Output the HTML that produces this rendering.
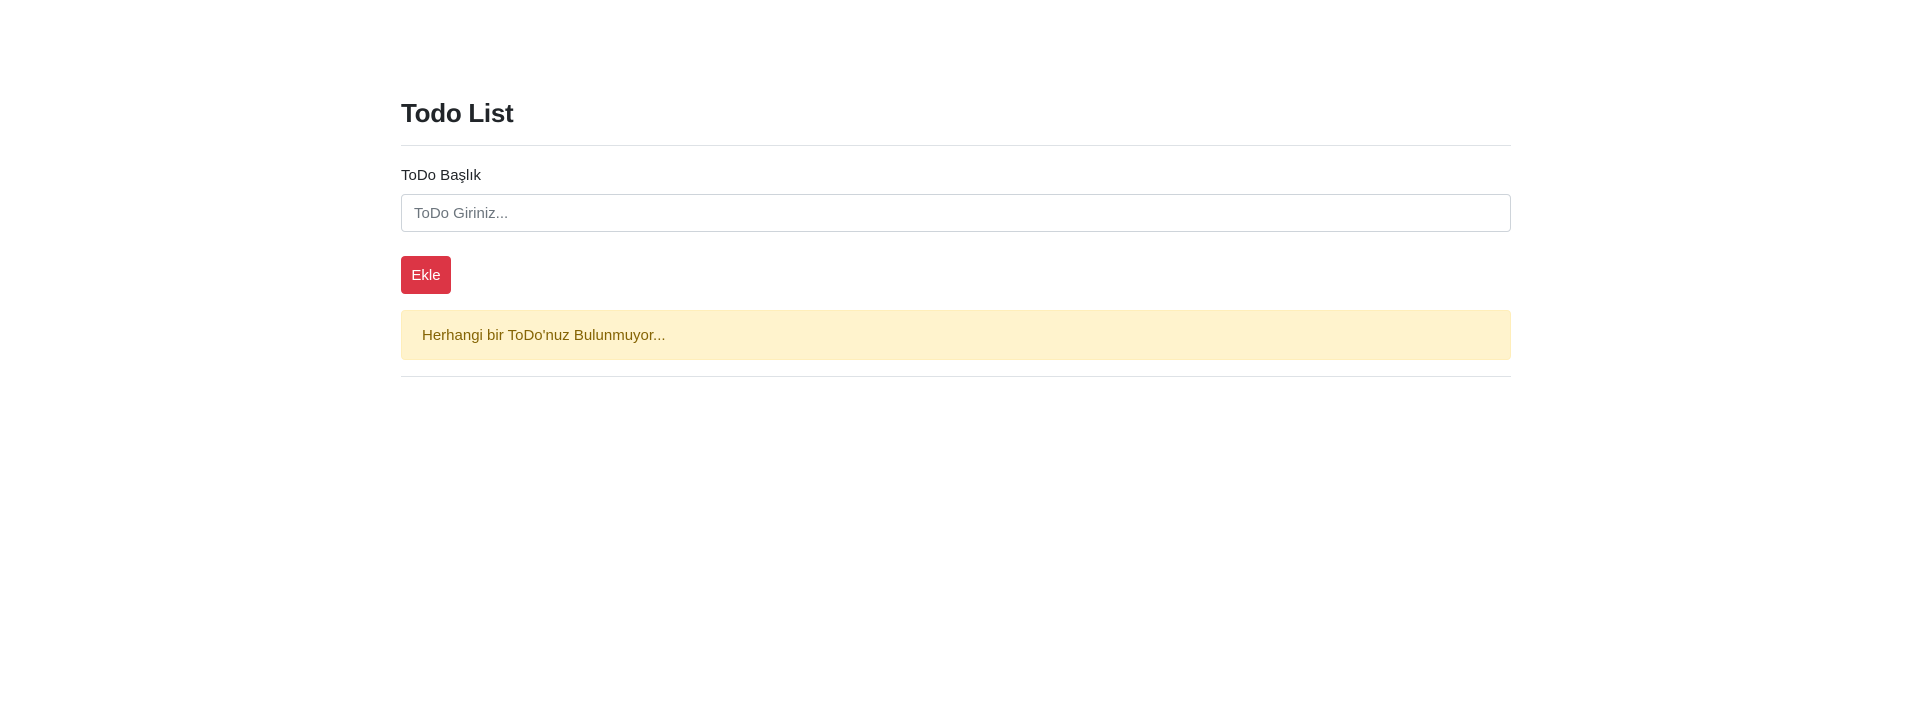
<!DOCTYPE html>
<html><head><meta charset="utf-8"><style>
body{margin:0;background:#fff;font-family:"Liberation Sans",sans-serif;color:#212529;width:1909px;height:728px;overflow:hidden;position:relative}
.a{position:absolute;left:401px;width:1110px}
h2{position:absolute;left:401px;top:97px;margin:0;font-size:26px;font-weight:bold;line-height:32px;letter-spacing:-0.3px}
.hr{height:1px;background:#dee2e6}
.lbl{top:166px;font-size:15px;line-height:20px}
.inp{top:194px;height:36px;border:1px solid #ced4da;border-radius:4px;width:1108px}
.inp span{position:absolute;left:12px;top:10px;font-size:15px;color:#6c757d}
.btn{position:absolute;left:401px;top:256px;width:50px;height:38px;background:#dc3545;border-radius:4px;color:#fff;font-size:15px;line-height:40px;text-align:center}
.al{top:310px;height:48px;width:1108px;background:#fff3cd;border:1px solid #ffeeba;border-radius:4px;color:#856404;font-size:15px}
.al span{position:absolute;left:20px;top:16px}
</style></head><body>
<h2>Todo List</h2>
<div class="a hr" style="top:145px"></div>
<div class="a lbl">ToDo Başlık</div>
<div class="a inp"><span>ToDo Giriniz...</span></div>
<div class="btn">Ekle</div>
<div class="a al"><span>Herhangi bir ToDo'nuz Bulunmuyor...</span></div>
<div class="a hr" style="top:376px"></div>
</body></html>
